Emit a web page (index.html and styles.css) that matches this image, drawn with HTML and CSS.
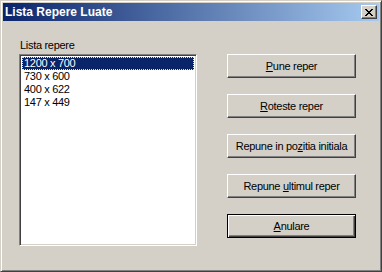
FILE: index.html
```html
<!DOCTYPE html>
<html lang="ro">

<head>
    <meta charset="UTF-8">
    <title>Lista Repere Luate</title>
    <link rel="stylesheet" href="styles.css">
</head>

<body>
    <div class="window">
        <div class="titlebar">
            <span class="title">Lista Repere Luate</span>
            <button class="close-btn" aria-label="Inchide">
                <svg width="8" height="7" viewBox="0 0 8 7">
                    <path d="M0 0h2v1h1v1h2v-1h1v-1h2v1h-1v1h-1v1h-1v1h1v1h1v1h1v1h-2v-1h-1v-1h-2v1h-1v1h-2v-1h1v-1h1v-1h1v-1h-1v-1h-1v-1h-1z" fill="#000"/>
                </svg>
            </button>
        </div>
        <div class="client">
            <div class="list-col">
                <div class="label">Lista repere</div>
                <div class="listbox">
                    <div class="item selected">1200 x 700</div>
                    <div class="item">730 x 600</div>
                    <div class="item">400 x 622</div>
                    <div class="item">147 x 449</div>
                </div>
            </div>
            <div class="btn-col">
                <button class="btn"><u>P</u>une reper</button>
                <button class="btn"><u>R</u>oteste reper</button>
                <button class="btn">Repune in po<u>z</u>itia initiala</button>
                <button class="btn">Repune <u>u</u>ltimul reper</button>
                <button class="btn default"><u>A</u>nulare</button>
            </div>
        </div>
    </div>
</body>

</html>
```

FILE: styles.css
```css
body {
    margin: 0;
    background-color: #d4d0c8;
    font-family: 'Liberation Sans', Arial, sans-serif;
    font-size: 11px;
    letter-spacing: -0.3px;
    color: #000;
}

.window {
    width: 382px;
    height: 272px;
    box-sizing: border-box;
    padding: 2px;
    background-color: #d4d0c8;
    border: 1px solid;
    border-color: #d4d0c8 #404040 #404040 #d4d0c8;
    box-shadow: inset 1px 1px #fff, inset -1px -1px #808080;
    overflow: hidden;
}

.titlebar {
    height: 18px;
    display: flex;
    align-items: center;
    justify-content: space-between;
    padding: 0 2px;
    background: linear-gradient(to right, #0a246a, #a6caf0);
}

.title {
    color: #fff;
    font-weight: bold;
    font-size: 12px;
    letter-spacing: 0;
    line-height: 18px;
}

.close-btn {
    width: 16px;
    height: 14px;
    padding: 0;
    display: flex;
    align-items: center;
    justify-content: center;
    background-color: #d4d0c8;
    border: 1px solid;
    border-color: #fff #404040 #404040 #fff;
    box-shadow: inset -1px -1px #808080;
}

.client {
    display: flex;
    align-items: flex-start;
    padding: 17px 0 0 16px;
    margin-top: 1px;
}

.list-col {
    display: flex;
    flex-direction: column;
}

.label {
    line-height: 13px;
    margin: 0 0 2px 1px;
}

.listbox {
    width: 178px;
    height: 192px;
    box-sizing: border-box;
    padding: 2px;
    background-color: #fff;
    border: 1px solid;
    border-color: #808080 #fff #fff #808080;
    box-shadow: inset 1px 1px #404040, inset -1px -1px #d4d0c8;
}

.item {
    height: 13px;
    line-height: 13px;
    padding-left: 2px;
}

.item.selected {
    background-color: #0a246a;
    color: #fff;
    outline: 1px dotted #e8e4dc;
    outline-offset: -1px;
}

.btn-col {
    display: flex;
    flex-direction: column;
    gap: 16px;
    margin-left: 30px;
    padding-top: 15px;
}

.btn {
    width: 129px;
    height: 24px;
    padding: 0;
    font-family: inherit;
    font-size: 11px;
    letter-spacing: -0.3px;
    color: #000;
    background-color: #d4d0c8;
    border: 1px solid;
    border-color: #fff #404040 #404040 #fff;
    box-shadow: inset -1px -1px #808080;
}

.btn.default {
    border: 1px solid #000;
    box-shadow: inset 1px 1px #fff, inset -1px -1px #404040, inset -2px -2px #808080;
}
```
